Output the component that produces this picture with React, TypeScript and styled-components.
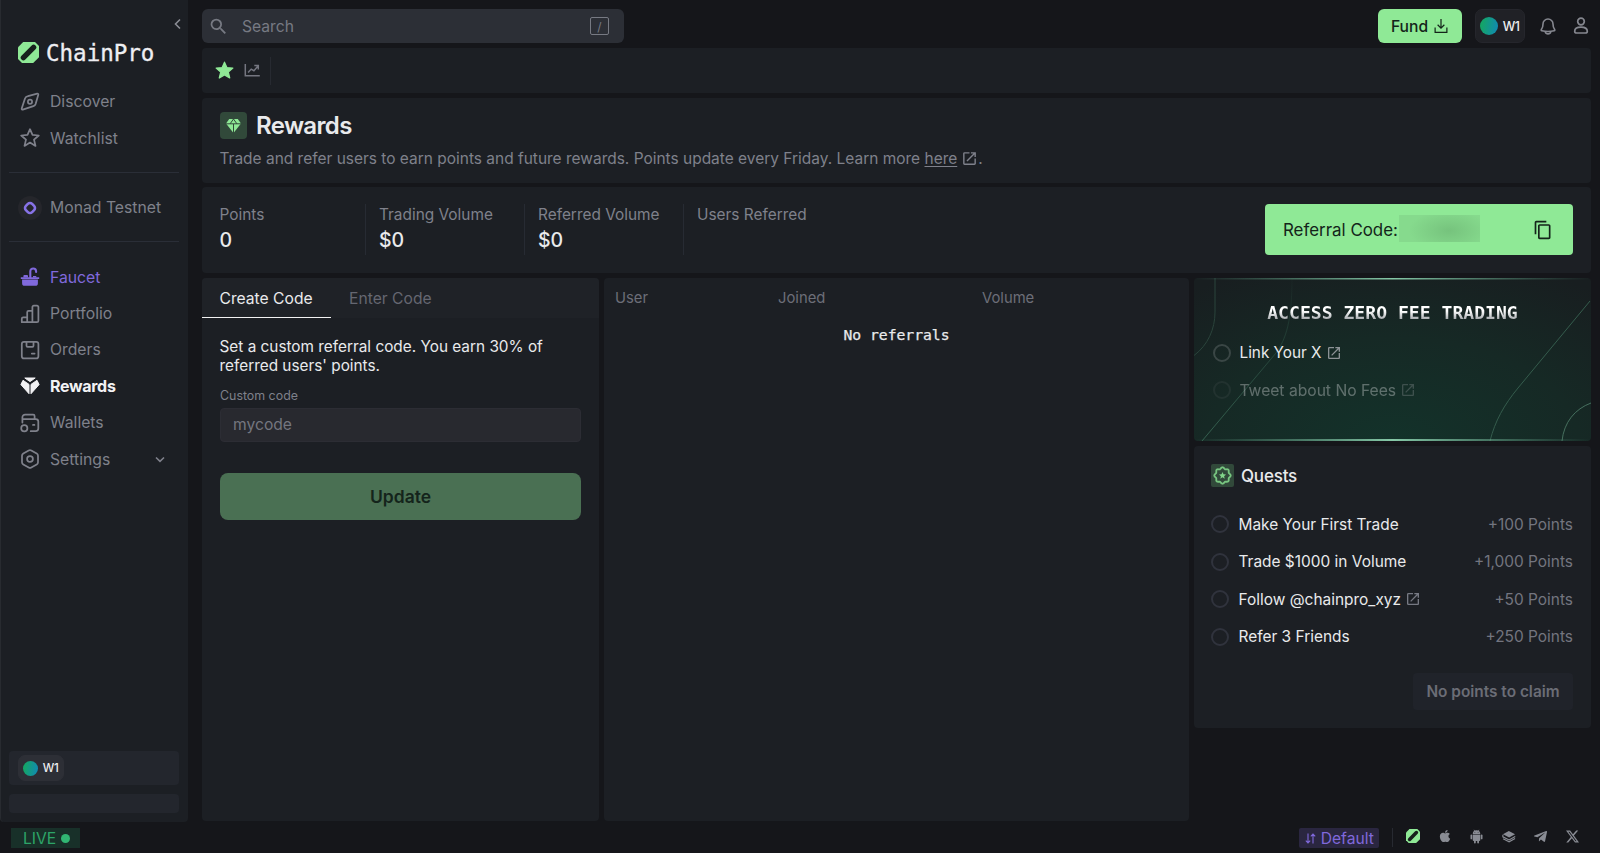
import React from "react";
import styled, { createGlobalStyle } from "styled-components";
import { FaApple, FaTelegramPlane } from "react-icons/fa";
import { BsTwitterX } from "react-icons/bs";
import { MdSearch, MdOpenInNew, MdContentCopy } from "react-icons/md";

const color = {
  bg: "#15161a",
  panel: "#1c1f24",
  line: "#272b33",
  muted: "#7f818b",
  dim: "#6c6e78",
  text: "#e9eaec",
  green: "#8fe996",
  purple: "#8069dc",
};

const GlobalStyle = createGlobalStyle`
  * { box-sizing: border-box; }
  body {
    margin: 0;
    background: ${color.bg};
    color: ${color.text};
    font-family: Inter, "Liberation Sans", sans-serif;
    font-size: 15.65px;
  }
  button { font: inherit; border: 0; padding: 0; }
  svg { display: block; flex: none; }
`;

const mono = `"DejaVu Sans Mono", "Liberation Mono", monospace`;

const Window = styled.div`
  display: flex;
  flex-direction: column;
  width: 1600px;
  height: 853px;
  overflow: hidden;
  background: ${color.bg};
`;

const Body = styled.div`
  display: flex;
  gap: 14px;
  height: 822px;
`;

/* Sidebar */

const Sidebar = styled.aside`
  display: flex;
  flex-direction: column;
  width: 188px;
  height: 822px;
  padding: 0 9px 9px 8px;
  background: ${color.panel};
  border-left: 1px solid #282b30;
  border-radius: 0 0 4px 4px;
`;

const Collapse = styled.div`
  display: flex;
  justify-content: flex-end;
  height: 42px;
  padding: 18px 0 0;
  margin-right: -2px;
  color: #8a8c94;
`;

const Brand = styled.div`
  display: flex;
  align-items: center;
  gap: 7px;
  height: 21px;
  padding-left: 9px;
  font: 22.5px/21px ${mono};
  color: #eeeef2;
  -webkit-text-stroke: 0.35px #eeeef2;
  span { padding-top: 1px; }
`;

const Nav = styled.nav<{ $top: number }>`
  display: flex;
  flex-direction: column;
  margin-top: ${(p) => p.$top}px;
`;

const NavItem = styled.a<{ $tone?: string; $bold?: boolean }>`
  display: flex;
  align-items: center;
  gap: 10.5px;
  height: 36.35px;
  padding: 0 14px 0 10.5px;
  color: ${(p) => p.$tone ?? color.muted};
  font-size: ${(p) => (p.$bold ? 16 : 15.75)}px;
  font-weight: ${(p) => (p.$bold ? 700 : 400)};
  letter-spacing: ${(p) => (p.$bold ? -0.3 : 0)}px;
  span { flex: 1; white-space: nowrap; }
`;

const Rule = styled.div<{ $top: number }>`
  height: 1px;
  margin-top: ${(p) => p.$top}px;
  background: #2a2e37;
`;

const NetworkBadge = styled.i`
  display: grid;
  place-items: center;
  width: 24px;
  height: 24px;
  margin: 0 -2px;
  border-radius: 50%;
  background: #25262b;
`;

const SideBox = styled.div<{ $h: number; $push?: boolean }>`
  display: flex;
  align-items: center;
  height: ${(p) => p.$h}px;
  margin-top: ${(p) => (p.$push ? "auto" : "9px")};
  padding-left: 9px;
  border-radius: 4px;
  background: #23262d;
`;

const WalletChip = styled.div<{ $large?: boolean }>`
  display: flex;
  align-items: center;
  justify-content: center;
  gap: 5px;
  width: ${(p) => (p.$large ? 50 : 46)}px;
  height: ${(p) => (p.$large ? 34 : 26)}px;
  padding-right: 1px;
  border-radius: 7px;
  background: ${(p) => (p.$large ? "#202126" : "#2d2f36")};
  border: 1px solid ${(p) => (p.$large ? "#25262c" : "#2d2f36")};
  color: #eeeef0;
  font-size: ${(p) => (p.$large ? 12.5 : 11.5)}px;
  font-weight: 500;
  letter-spacing: -0.5px;
`;

const Orb = styled.i<{ $size: number }>`
  width: ${(p) => p.$size}px;
  height: ${(p) => p.$size}px;
  border-radius: 50%;
  background: linear-gradient(100deg, #14a468 15%, #118cae 90%);
`;

/* Main column */

const Main = styled.main`
  display: flex;
  flex-direction: column;
  width: 1389px;
`;

const TopBar = styled.header`
  display: flex;
  align-items: center;
  height: 34px;
  margin: 9px 0 5px;
`;

const SearchBox = styled.div`
  display: flex;
  align-items: center;
  width: 422px;
  height: 34px;
  margin-right: auto;
  padding: 0 15px 0 6px;
  border-radius: 6px;
  background: #2c2f36;
  color: #777a83;
  span { flex: 1; margin-left: 13px; }
`;

const KeyHint = styled.kbd`
  display: grid;
  place-items: center;
  width: 19px;
  height: 18px;
  border: 1px solid #777a83;
  border-radius: 2px;
  font: 12px Inter, sans-serif;
`;

const FundButton = styled.button`
  display: flex;
  align-items: center;
  justify-content: center;
  gap: 6px;
  width: 84px;
  height: 34px;
  margin-right: 13.5px;
  border-radius: 6px;
  background: ${color.green};
  color: #14241a;
  font-weight: 500;
`;

const TopIcons = styled.div`
  display: flex;
  gap: 17px;
  margin-left: 15px;
  margin-right: 2px;
  color: #85878f;
`;

const Panel = styled.section`
  background: ${color.panel};
  border-radius: 4px;
`;

const FavoritesBar = styled(Panel)`
  display: flex;
  align-items: center;
  gap: 9.5px;
  height: 45px;
  padding: 0 13px;
  margin-bottom: 5px;
`;

const Tick = styled.i`
  width: 1px;
  height: 28px;
  background: #272a31;
`;

const Intro = styled(Panel)`
  height: 85px;
  padding: 14px 18px 0;
  margin-bottom: 4px;
  p {
    display: flex;
    align-items: center;
    height: 26px;
    margin: 6px 0 0 -0.5px;
    font-size: 15.47px;
    color: ${color.muted};
    white-space: pre;
  }
  u { text-underline-offset: 2px; margin-right: 4px; }
`;

const TitleRow = styled.div`
  display: flex;
  align-items: center;
  gap: 9px;
  height: 27px;
  h1 { margin: 0; font-size: 24px; font-weight: 600; letter-spacing: -0.65px; line-height: 27px; }
`;

const IconTile = styled.i<{ $size: number }>`
  display: grid;
  place-items: center;
  width: ${(p) => p.$size}px;
  height: ${(p) => p.$size}px;
  border-radius: ${(p) => (p.$size > 25 ? 4 : 2)}px;
  background: #31493a;
  color: ${color.green};
`;

const Stats = styled(Panel)`
  display: flex;
  height: 86px;
  padding: 17px 18px 17px 17.5px;
  margin-bottom: 5px;
`;

const Stat = styled.div`
  display: flex;
  flex-direction: column;
  width: 159px;
  height: 51px;
  border-left: 1px solid ${color.line};
  padding-left: 13.5px;
  color: ${color.muted};
  white-space: nowrap;
  font-size: 15.4px;
  line-height: 21px;
  &:first-child { border-left: 0; padding-left: 0; width: 145px; }
  b { margin-top: 3px; font-size: 19.5px; line-height: 24px; font-weight: 500; color: ${color.text}; }
`;

const Referral = styled.button`
  display: flex;
  align-items: center;
  width: 308px;
  height: 51px;
  margin-left: auto;
  padding: 0 20px 0 18px;
  border-radius: 4px;
  background: ${color.green};
  color: #14241a;
  font-size: 16.9px;
  svg { margin-left: auto; }
`;

const Redacted = styled.i`
  width: 81px;
  height: 27px;
  margin: -2px 0 0 1px;
  background: radial-gradient(ellipse 50% 75% at 62% 58%, #76c37d, #86da8d);
`;

const Columns = styled.div`
  display: flex;
  gap: 5px;
  height: 543px;
`;

const CodePanel = styled(Panel)`
  width: 397px;
  overflow: hidden;
`;

const Tabs = styled.div`
  display: flex;
  height: 40px;
  background: #1f2227;
`;

const Tab = styled.div<{ $active?: boolean }>`
  height: 40px;
  padding: 0 18px ${(p) => (p.$active ? "0 17.5px" : "0 18.5px")};
  line-height: ${(p) => (p.$active ? 41 : 42)}px;
  color: ${(p) => (p.$active ? color.text : "#656771")};
  border-bottom: ${(p) => (p.$active ? "1px solid #f2f2f2" : "0")};
`;

const CodeForm = styled.div`
  display: flex;
  flex-direction: column;
  padding: 19px 18px 0;
  p { margin: 0 0 0 -0.5px; font-size: 15.35px; line-height: 19.4px; white-space: nowrap; }
  label { margin-top: 12.5px; font-size: 12.4px; line-height: 16px; color: ${color.muted}; }
`;

const CodeInput = styled.div`
  height: 34px;
  margin-top: 3.5px;
  padding-left: 12px;
  border: 1px solid #2c2d34;
  border-radius: 4px;
  background: #28292f;
  color: #74767f;
  line-height: 31px;
`;

const UpdateButton = styled.button`
  height: 47px;
  margin-top: 31px;
  border-radius: 8px;
  background: #4a7053;
  color: #14241b;
  font-size: 17.5px;
  font-weight: 600;
`;

const ReferralTable = styled(Panel)`
  width: 585px;
`;

const TableHead = styled.div`
  display: grid;
  grid-template-columns: 163px 204px 1fr;
  height: 40px;
  padding-left: 11px;
  line-height: 40px;
  font-size: 14.8px;
  color: ${color.dim};
`;

const Empty = styled.p`
  margin: 0;
  height: 35px;
  text-align: center;
  font: 14.7px/33px ${mono};
  -webkit-text-stroke: 0.25px ${color.text};
`;

const Side = styled.div`
  display: flex;
  flex-direction: column;
  width: 397px;
  gap: 5px;
`;

const Promo = styled.section`
  position: relative;
  height: 163px;
  padding: 23px 18px 0;
  border-radius: 4px;
  overflow: hidden;
  background: radial-gradient(ellipse 85% 115% at 50% 100%, #13322a, #162925 55%, #181e20 100%);
  h2 {
    position: relative;
    margin: 0 0 13px;
    height: 25px;
    text-align: center;
    font: bold 18.1px/24px ${mono};
    background: linear-gradient(#ffffff 40%, #9b9fa3 78%);
    background-clip: text;
    color: transparent;
    white-space: nowrap;
  }
`;

const PromoArt = styled.svg`
  position: absolute;
  inset: 0;
`;

const Task = styled.div<{ $faded?: boolean }>`
  position: relative;
  display: flex;
  align-items: center;
  height: 37.5px;
  margin-top: ${(p) => (p.$faded ? 0 : -5)}px;
  padding-left: 0.5px;
  opacity: ${(p) => (p.$faded ? 0.35 : 1)};
  font-size: ${(p) => (p.$faded ? 15.65 : 15.3)}px;
  white-space: nowrap;
  svg { margin-left: 4px; color: #8c9295; }
`;

const Ring = styled.i`
  width: 18px;
  height: 18px;
  margin-right: 9px;
  border: 2px solid #3a4645;
  border-radius: 50%;
`;

const Quests = styled(Panel)`
  height: 282px;
  padding: 18px 18px 0 17px;
`;

const QuestTitle = styled.div`
  display: flex;
  align-items: center;
  gap: 7px;
  height: 23px;
  margin-bottom: 18.4px;
  font-size: 17px;
  font-weight: 500;
  letter-spacing: -0.2px;
`;

const Quest = styled.div`
  display: flex;
  align-items: center;
  height: 37.5px;
  font-size: 15.45px;
  white-space: nowrap;
  svg { margin-left: 4px; color: #767983; }
  b { margin-left: auto; font-weight: 400; color: #73757f; }
  ${Ring} { border-color: #30333d; margin-right: 9.5px; }
`;

const ClaimButton = styled.button`
  display: block;
  width: 160px;
  height: 37px;
  margin: 17.6px 0 0 auto;
  border-radius: 4px;
  background: #20232a;
  color: #6b6d76;
  font-size: 15.4px;
  font-weight: 600;
`;

/* Status bar */

const StatusBar = styled.footer`
  display: flex;
  align-items: center;
  height: 31px;
  padding: 0 22px 0 11px;
`;

const Live = styled.div`
  display: flex;
  align-items: center;
  gap: 5px;
  width: 69px;
  height: 20px;
  padding: 1px 0 0 12px;
  background: #183029;
  color: #2da568;
  &::after { content: ""; width: 9px; height: 9px; border-radius: 50%; background: #31b673; }
`;

const Preset = styled.div`
  display: flex;
  align-items: center;
  gap: 5px;
  width: 80px;
  height: 20px;
  margin: 0 13px 0 auto;
  padding: 1px 0 0 6px;
  background: #2a2640;
  color: ${color.purple};
  border-radius: 2px;
`;

const Links = styled.div`
  display: grid;
  grid-template-columns: repeat(6, 31.8px);
  place-items: center;
  height: 18px;
  margin: -3px -10px 0 4.5px;
  color: #898c94;
`;

const Separator = styled(Tick)`
  height: 19px;
`;

const LogoMark = ({ size }: { size: number }) => (
  <svg width={size} height={size} viewBox="0 0 21 21">
    <path d="M5.2 0H17l4 4v11.2L15.2 21H4l-4-4V5.2Z" fill={color.green} />
    <path d="M5.4 15.6 15.6 5.4" stroke="#17211c" strokeWidth="5.4" strokeLinecap="round" />
  </svg>
);

const Glyph = ({ children, size = 20, width = 1.75 }: { children: React.ReactNode; size?: number; width?: number }) => (
  <svg width={size} height={size} viewBox="0 0 20 20" fill="none" stroke="currentColor" strokeWidth={width} strokeLinejoin="round" strokeLinecap="round">
    {children}
  </svg>
);

const STAR = "M10 1.2 12.5 6.9 18.8 7.5 14 11.6 15.5 17.9 10 14.6 4.5 17.9 6 11.6 1.2 7.5 7.5 6.9Z";

const DiscoverIcon = () => (
  <Glyph>
    <path d="M8 4.1 17.2 1.6a.9.9 0 0 1 1.1 1.1L15.6 12a3.4 3.4 0 0 1-2.2 2.2L2.8 17.6a.9.9 0 0 1-1.1-1.1L5 6.5a3.6 3.6 0 0 1 3-2.4Z" />
    <circle cx="10" cy="9.7" r="2.1" />
  </Glyph>
);

const StarIcon = () => (
  <Glyph><path d={STAR} /></Glyph>
);

const NetworkIcon = () => (
  <svg width="14" height="14" viewBox="0 0 14 14">
    <rect x="2.6" y="2.6" width="8.8" height="8.8" rx="3" transform="rotate(45 7 7)" fill="none" stroke="#8772e6" strokeWidth="2.6" />
  </svg>
);

const FaucetIcon = () => (
  <svg width="20" height="20" viewBox="0 0 20 20" fill="currentColor">
    <path d="M.8 10.200h18.400v1.800H.8ZM2.100 12.500h15.800v3.700a2.600 2.600 0 0 1-2.600 2.600H4.700a2.600 2.600 0 0 1-2.600-2.600Z" />
    <path d="M3.400 10.500V9a.9.9 0 0 1 .9-.9h2.800a.9.9 0 0 1 .9.9v1.500ZM13 10.500V9h2.600a.8.8 0 0 1 .8.8v.7Z" />
    <path d="M10.300 10.500V4.400a2.900 2.900 0 0 1 5.800 0V5" fill="none" stroke="currentColor" strokeWidth="2.100" strokeLinecap="round" />
  </svg>
);

const PortfolioIcon = () => (
  <Glyph>
    <path d="M1.8 18.2v-3.4a1.4 1.4 0 0 1 1.4-1.4h4V8.2a1.4 1.4 0 0 1 1.4-1.4h3.8V3a1.4 1.4 0 0 1 1.4-1.4H17A1.4 1.4 0 0 1 18.4 3v13.8a1.4 1.4 0 0 1-1.4 1.4ZM7.2 13.4v4.8M12.4 6.8v11.4" />
  </Glyph>
);

const OrdersIcon = () => (
  <Glyph>
    <rect x="1.8" y="1.8" width="16.6" height="16.6" rx="2.2" />
    <path d="M6.5 2v3.8a1 1 0 0 0 1 1h5a1 1 0 0 0 1-1V2M11.8 13.6h2.8" />
  </Glyph>
);

const RewardsIcon = () => (
  <svg width="20" height="20" viewBox="0 0 20 20" fill="#f2f2f4" stroke="#f2f2f4" strokeLinejoin="round">
    <path d="M4.8 2h10.4L10 5.6Z" />
    <path d="M3 4.3 9 8.4v9.3L.9 8.6Z" />
    <path d="M17 4.3 11 8.4v9.3l8.1-9.1Z" />
  </svg>
);

const WalletsIcon = () => (
  <Glyph>
    <path d="M2.400 9.500V4.300A2.700 2.700 0 0 1 5.100 1.600h8.100a1.400 1.400 0 0 1 1.400 1.400v2.900M2.400 6h13.300a2.600 2.600 0 0 1 2.600 2.600v7a2.600 2.600 0 0 1-2.600 2.600h-5M13 11.900h1.400" />
    <circle cx="4.300" cy="15.200" r="3.100" />
  </Glyph>
);

const SettingsIcon = () => (
  <Glyph>
    <path d="M8.7 1.5a2.6 2.6 0 0 1 2.6 0l5.4 3.1A2.6 2.6 0 0 1 18 6.900v6.200a2.600 2.600 0 0 1-1.300 2.300l-5.400 3.100a2.600 2.600 0 0 1-2.600 0l-5.400-3.100A2.600 2.600 0 0 1 2 13.100V6.900a2.600 2.600 0 0 1 1.300-2.300Z" />
    <circle cx="10" cy="10" r="2.9" />
  </Glyph>
);

const ChartIcon = () => (
  <svg width="17" height="17" viewBox="0 0 17 17" fill="none" stroke="#747680" strokeWidth="1.5">
    <path d="M1.3 2v11.700h14.500" />
    <path d="m4.100 10.400 3.100-3.300 2.700 1.600 3.900-4.400M10.300 3.600h4v3.800" />
  </svg>
);

const DownloadIcon = () => (
  <svg width="14" height="16" viewBox="0 0 15 17" fill="none" stroke="currentColor" strokeWidth="1.3">
    <path d="M1.2 10v5.4h12.6V10M7.5 1v9.5M3.9 7.2l3.6 3.6 3.6-3.6" />
  </svg>
);

const BellIcon = () => (
  <svg width="16" height="18" viewBox="0 0 16 18" fill="none" stroke="currentColor" strokeWidth="1.6" strokeLinejoin="round">
    <path d="M3 7a5 5 0 0 1 10 0c0 3.2.6 4.3 1.6 5.4.5.6.2 1.2-.4 1.3-3.6.9-8.8.9-12.4 0-.6-.1-.9-.7-.4-1.3C2.4 11.3 3 10.2 3 7Z" />
    <path d="M5.2 14.7a2.9 2.9 0 0 0 5.6 0" />
  </svg>
);

const UserIcon = () => (
  <svg width="16" height="18" viewBox="0 0 16 18" fill="none" stroke="currentColor" strokeWidth="1.7">
    <circle cx="8" cy="4.5" r="3.3" />
    <path d="M1.7 14.2c0-2.400 2.500-4 6.300-4s6.300 1.600 6.300 4c0 1-.8 1.800-2 1.800H3.700c-1.200 0-2-.8-2-1.800Z" />
  </svg>
);

const GemIcon = () => (
  <svg width="15" height="14" viewBox="0 0 15 14" fill="currentColor">
    <path d="M3.2 0h8.6L15 4.6 7.5 14 0 4.6Z" />
    <path d="M0 4.8h15M4.1 4.8 7.5 0l3.4 4.8M7.5 5v9" stroke="#31493a" strokeWidth="1" fill="none" />
  </svg>
);

const badgePoints = Array.from({ length: 48 }, (_, i) => {
  const a = (i / 48) * Math.PI * 2;
  const r = 7.5 + 0.75 * Math.cos(a * 8);
  return `${(9.5 + r * Math.sin(a)).toFixed(2)},${(9.5 - r * Math.cos(a)).toFixed(2)}`;
}).join(" ");

const QuestIcon = () => (
  <svg width="19" height="19" viewBox="0 0 19 19">
    <polygon points={badgePoints} fill="none" stroke="#78c681" strokeWidth="1.8" strokeLinejoin="round" />
    <path d={STAR} fill="#82d58a" transform="translate(5.5 5.5) scale(.4)" />
  </svg>
);

const Chevron = ({ left }: { left?: boolean }) => (
  <svg width={left ? 7 : 10} height={left ? 12 : 7} viewBox={left ? "0 0 7 12" : "0 0 10 7"} fill="none" stroke="currentColor" strokeWidth="1.6">
    <path d={left ? "M6 1.5 1.5 6 6 10.5" : "M1 1.5 5 5.3 9 1.5"} />
  </svg>
);

const SwapIcon = () => (
  <svg width="11" height="11" viewBox="0 0 11 11" fill="none" stroke="currentColor" strokeWidth="1.1">
    <path d="M3 .5v9.3M.8 7.7 3 9.9l2.2-2.2M8 10.5V1.2M5.8 3.3 8 1.1l2.2 2.2" />
  </svg>
);

const AndroidIcon = () => (
  <svg width="13" height="15" viewBox="0 0 13 15" fill="currentColor">
    <path d="M2.700 5.200a3.800 3.900 0 0 1 7.600 0Z" />
    <path d="M2.700 5.800h7.600v5.300a.8.8 0 0 1-.8.8h-6a.8.8 0 0 1-.8-.8Z" />
    <rect x="0.500" y="5.600" width="1.700" height="4.700" rx=".85" />
    <rect x="10.800" y="5.600" width="1.700" height="4.700" rx=".85" />
    <rect x="4" y="10" width="1.800" height="4.400" rx=".9" />
    <rect x="7.200" y="10" width="1.800" height="4.400" rx=".9" />
    <path d="M4 .8 5 2.500M9 .8 8 2.500" stroke="currentColor" strokeWidth=".7" />
    <circle cx="4.900" cy="3.600" r=".45" fill={color.bg} />
    <circle cx="8.100" cy="3.600" r=".45" fill={color.bg} />
  </svg>
);

const DocsIcon = () => (
  <svg width="14" height="13" viewBox="0 0 15 13" fill="currentColor">
    <path d="M7.300.5 14 4 7.700 7.600 1 4.200Z" />
    <path d="M.9 4.600v2.300l6.700 3.300L14.200 6.500" fill="none" stroke="currentColor" strokeWidth="1.2" />
    <path d="M1.200 8.900 7.600 12.200l6.400-3.500" fill="none" stroke="currentColor" strokeWidth="1.2" />
  </svg>
);

const quests = [
  { name: "Make Your First Trade", points: "+100 Points" },
  { name: "Trade $1000 in Volume", points: "+1,000 Points" },
  { name: "Follow @chainpro_xyz", points: "+50 Points", link: true },
  { name: "Refer 3 Friends", points: "+250 Points" },
];

const stats = [
  { label: "Points", value: "0" },
  { label: "Trading Volume", value: "$0" },
  { label: "Referred Volume", value: "$0" },
  { label: "Users Referred", value: "" },
];

export default function App() {
  return (
    <Window>
      <GlobalStyle />
      <Body>
        <Sidebar>
          <Collapse><Chevron left /></Collapse>
          <Brand><LogoMark size={21} /><span>ChainPro</span></Brand>
          <Nav $top={20.7}>
            <NavItem><DiscoverIcon /><span>Discover</span></NavItem>
            <NavItem><StarIcon /><span>Watchlist</span></NavItem>
          </Nav>
          <Rule $top={15.3} />
          <Nav $top={16.8}>
            <NavItem><NetworkBadge><NetworkIcon /></NetworkBadge><span>Monad Testnet</span></NavItem>
          </Nav>
          <Rule $top={15.5} />
          <Nav $top={16.8}>
            <NavItem $tone={color.purple}><FaucetIcon /><span>Faucet</span></NavItem>
            <NavItem><PortfolioIcon /><span>Portfolio</span></NavItem>
            <NavItem><OrdersIcon /><span>Orders</span></NavItem>
            <NavItem $tone="#f2f2f4" $bold><RewardsIcon /><span>Rewards</span></NavItem>
            <NavItem><WalletsIcon /><span>Wallets</span></NavItem>
            <NavItem><SettingsIcon /><span>Settings</span><Chevron /></NavItem>
          </Nav>
          <SideBox $h={34} $push>
            <WalletChip><Orb $size={15} />W1</WalletChip>
          </SideBox>
          <SideBox $h={19} />
        </Sidebar>

        <Main>
          <TopBar>
            <SearchBox><MdSearch size={21} /><span>Search</span><KeyHint>/</KeyHint></SearchBox>
            <FundButton>Fund <DownloadIcon /></FundButton>
            <WalletChip $large><Orb $size={18} />W1</WalletChip>
            <TopIcons><BellIcon /><UserIcon /></TopIcons>
          </TopBar>

          <FavoritesBar>
            <svg width="19" height="19" viewBox="0 0 20 20"><path d={STAR} fill={color.green} stroke={color.green} strokeWidth="1.3" strokeLinejoin="round" /></svg>
            <ChartIcon />
            <Tick />
          </FavoritesBar>

          <Intro>
            <TitleRow><IconTile $size={27}><GemIcon /></IconTile><h1>Rewards</h1></TitleRow>
            <p>Trade and refer users to earn points and future rewards. Points update every Friday. Learn more <u>here</u><MdOpenInNew size={17} />.</p>
          </Intro>

          <Stats>
            {stats.map((s) => <Stat key={s.label}>{s.label}<b>{s.value}</b></Stat>)}
            <Referral>Referral Code:<Redacted /><MdContentCopy size={20} /></Referral>
          </Stats>

          <Columns>
            <CodePanel>
              <Tabs><Tab $active>Create Code</Tab><Tab>Enter Code</Tab></Tabs>
              <CodeForm>
                <p>Set a custom referral code. You earn 30% of<br />referred users' points.</p>
                <label>Custom code</label>
                <CodeInput>mycode</CodeInput>
                <UpdateButton>Update</UpdateButton>
              </CodeForm>
            </CodePanel>

            <ReferralTable>
              <TableHead><span>User</span><span>Joined</span><span>Volume</span></TableHead>
              <Empty>No referrals</Empty>
            </ReferralTable>

            <Side>
              <Promo>
                <PromoArt width="397" height="163" viewBox="0 0 397 163" fill="none">
                  <defs>
                    <linearGradient id="edge"><stop stopColor="#5fa58a" stopOpacity="0" /><stop offset=".5" stopColor="#87c9a8" /><stop offset="1" stopColor="#5fa58a" stopOpacity="0" /></linearGradient>
                    <linearGradient id="trail" x1="0" y1="163" x2="0" y2="0" gradientUnits="userSpaceOnUse"><stop stopColor="#35604f" /><stop offset="1" stopColor="#35604f" stopOpacity=".05" /></linearGradient>
                  </defs>
                  <path d="M0 77.5C14 67 21 51 21 34V0" stroke="#2b443c" />
                  <path d="M8 163 82 75C92 61 98 43 98 0" stroke="url(#trail)" />
                  <path d="M296 163C301 143 310 127 324 110L396 23" stroke="#355c4d" />
                  <path d="M368 163C370 144 381 131 397 125" stroke="#47705f" />
                  <rect width="397" height="1.5" fill="url(#edge)" />
                  <rect y="161" width="397" height="2" fill="url(#edge)" />
                </PromoArt>
                <h2>ACCESS ZERO FEE TRADING</h2>
                <Task><Ring />Link Your X<MdOpenInNew size={16} /></Task>
                <Task $faded><Ring />Tweet about No Fees<MdOpenInNew size={16} /></Task>
              </Promo>

              <Quests>
                <QuestTitle><IconTile $size={23}><QuestIcon /></IconTile>Quests</QuestTitle>
                {quests.map((q) => (
                  <Quest key={q.name}><Ring />{q.name}{q.link && <MdOpenInNew size={16} />}<b>{q.points}</b></Quest>
                ))}
                <ClaimButton>No points to claim</ClaimButton>
              </Quests>
            </Side>
          </Columns>
        </Main>
      </Body>

      <StatusBar>
        <Live>LIVE</Live>
        <Preset><SwapIcon />Default</Preset>
        <Separator />
        <Links>
          <LogoMark size={14} />
          <FaApple size={14} />
          <AndroidIcon />
          <DocsIcon />
          <FaTelegramPlane size={15} />
          <BsTwitterX size={13} />
        </Links>
      </StatusBar>
    </Window>
  );
}
